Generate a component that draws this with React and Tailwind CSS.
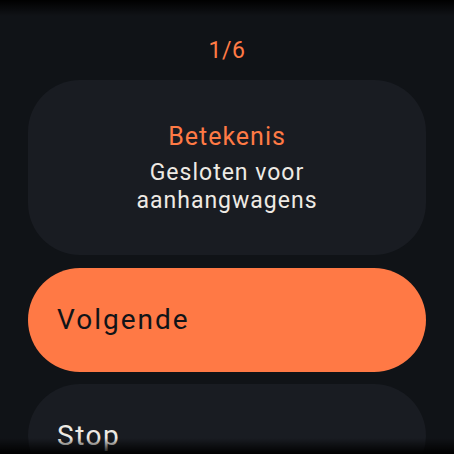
export default function App() {
  const font = { fontFamily: "Roboto, 'Noto Sans', sans-serif" };
  return (
    <div className="relative w-[454px] h-[454px] overflow-hidden bg-[#101317]" style={font}>
      <div className="flex flex-col items-center px-[28px]">
        <div className="h-[80px] pt-[36px] text-[23px] leading-[30px] text-[#ff7a45] tracking-[0.5px]">1/6</div>
        <div className="w-full h-[175px] rounded-[52px] bg-[#191c22] flex flex-col items-center justify-center text-center pt-[2px]">
          <div className="text-[25px] leading-[30px] text-[#ff7a45] tracking-[1px]">Betekenis</div>
          <div className="mt-[7px] text-[23px] leading-[28px] text-[#eeeae4] tracking-[1px]">
            Gesloten voor
            <br />
            aanhangwagens
          </div>
        </div>
        <div className="mt-[13px] w-full h-[104px] rounded-full bg-[#ff7945] flex items-center pl-[29px] text-[28px] text-[#111418] tracking-[2px]">
          Volgende
        </div>
        <div className="mt-[12px] w-full h-[104px] rounded-[52px] bg-[#191c22] flex items-center pl-[29px] text-[28px] text-[#eeeae4] tracking-[1.5px]">
          Stop
        </div>
      </div>
      {/* edge fades */}
      <div className="absolute inset-x-0 top-0 h-[16px] bg-gradient-to-b from-[#000000] to-transparent" />
      <div className="absolute inset-x-0 bottom-0 h-[16px] bg-gradient-to-t from-[#000000] to-transparent" />
    </div>
  );
}
